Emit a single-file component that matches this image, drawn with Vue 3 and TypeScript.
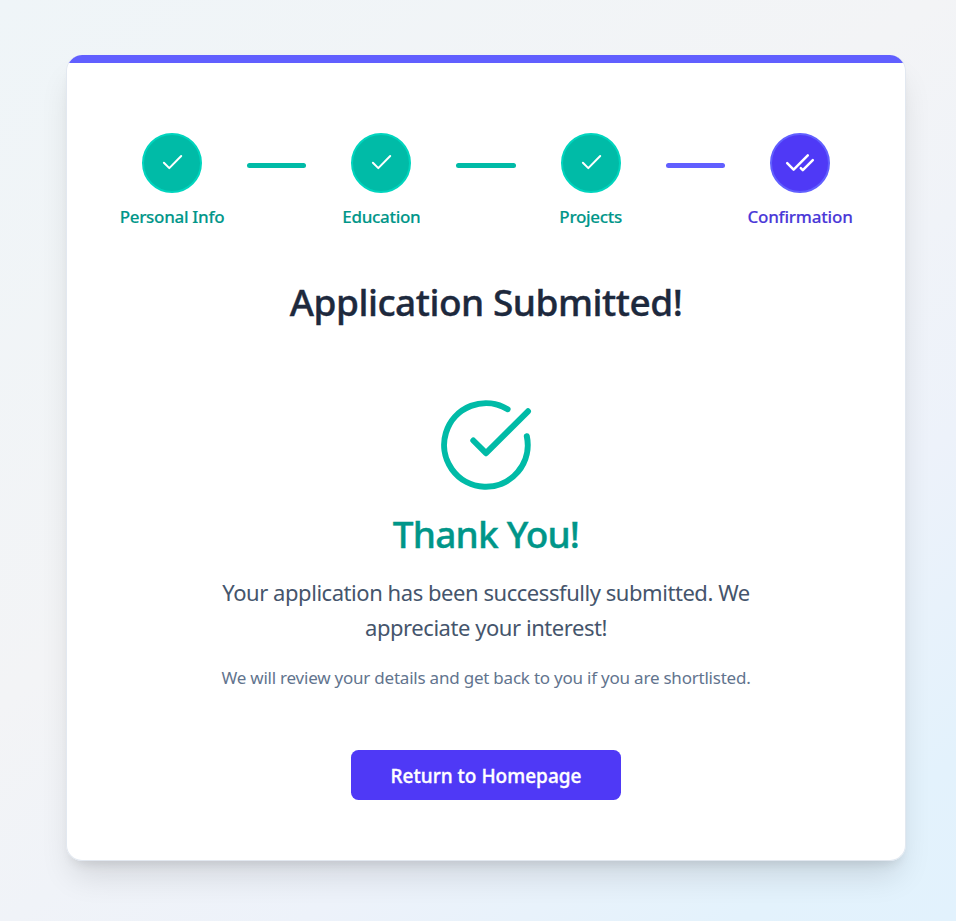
<script setup lang="ts">
interface Step {
  label: string
  current: boolean
}

const steps: Step[] = [
  { label: 'Personal Info', current: false },
  { label: 'Education', current: false },
  { label: 'Projects', current: false },
  { label: 'Confirmation', current: true },
]
</script>

<template>
  <main class="page">
    <section class="card">
      <div class="stepper">
        <template v-for="(step, index) in steps" :key="step.label">
          <span v-if="index > 0" class="bar" :class="{ current: step.current }"></span>
          <div class="step" :class="{ current: step.current }">
            <span class="dot">
              <svg v-if="step.current" width="30" height="30" viewBox="0 0 30 30" class="double">
                <path d="M2.2 15.2l6.4 6.4L22.8 7.4M15.8 20.2l2 2L27.8 12.2" />
              </svg>
              <svg v-else width="30" height="30" viewBox="0 0 30 30">
                <path d="M6.9 14.7l5.4 5.4L24.2 8" />
              </svg>
            </span>
            <span class="label">{{ step.label }}</span>
          </div>
        </template>
      </div>

      <h1>Application Submitted!</h1>

      <div class="result">
        <svg class="success" width="100" height="100" viewBox="0 0 100 100">
          <path d="M71.6 14.2A41.8 41.8 0 1 0 90.8 41.2" />
          <path d="M37.3 45.5L50 58.2L92 16.3" />
        </svg>
        <h2>Thank You!</h2>
        <p class="lead">Your application has been successfully submitted. We appreciate your interest!</p>
        <p class="note">We will review your details and get back to you if you are shortlisted.</p>
        <button type="button">Return to Homepage</button>
      </div>
    </section>
  </main>
</template>

<style>
body {
  margin: 0;
}
</style>

<style scoped>
.page {
  box-sizing: border-box;
  min-height: 921px;
  padding: 55px 50px 60px 66px;
  background: linear-gradient(143deg, #eff5f8, #f3f4f6 43%, #edf2fa 70%, #e3f2fc 90%, #e2f2fd);
  font-family: "Segoe UI", "Noto Sans", sans-serif;
}

.card {
  box-sizing: border-box;
  width: 840px;
  height: 806px;
  padding: 78px 30px 0;
  border: 1px solid #e2e8f0;
  border-top: 0;
  border-radius: 16px;
  background: linear-gradient(#615fff 8px, #fff 8px) border-box;
  box-shadow: 0 20px 32px -6px rgba(0, 0, 0, 0.12), 0 8px 12px -6px rgba(0, 0, 0, 0.11);
}

.stepper {
  display: flex;
}

.step {
  display: flex;
  flex: 1;
  flex-direction: column;
  align-items: center;
  color: #009689;
}

.dot {
  display: flex;
  box-sizing: border-box;
  width: 60px;
  height: 60px;
  align-items: center;
  justify-content: center;
  border: 2px solid #00d5be;
  border-radius: 50%;
  background: #00bba7;
}

.dot svg {
  fill: none;
  stroke: #fff;
  stroke-width: 2;
  stroke-linecap: round;
  stroke-linejoin: round;
}

.dot svg.double {
  stroke-width: 2.5;
}

.label {
  margin-top: 11px;
  font-size: 17px;
  font-weight: 500;
  line-height: 25px;
  letter-spacing: -0.3px;
  white-space: nowrap;
  -webkit-text-stroke: 0.15px currentColor;
}

.bar {
  width: 59.4px;
  height: 5px;
  margin-top: 30px;
  border-radius: 3px;
  background: #00bba7;
}

.step.current {
  color: #4f39f6;
}

.step.current .dot {
  border-color: #615fff;
  background: #4f39f6;
}

.step.current .label {
  color: #4a38d8;
  letter-spacing: -0.2px;
}

.bar.current {
  background: #615fff;
}

h1,
h2,
p {
  margin: 0;
}

h1 {
  margin-top: 50px;
  color: #1d293d;
  font-size: 37px;
  font-weight: 500;
  line-height: 45px;
  letter-spacing: -0.48px;
  text-align: center;
  -webkit-text-stroke: 0.4px currentColor;
}

.result {
  display: flex;
  flex-direction: column;
  align-items: center;
  padding-top: 71px;
  text-align: center;
}

.success {
  fill: none;
  stroke: #00bba7;
  stroke-width: 6;
  stroke-linecap: round;
  stroke-linejoin: round;
}

h2 {
  margin-top: 16px;
  color: #009689;
  font-size: 37px;
  font-weight: 500;
  line-height: 45px;
  letter-spacing: -0.8px;
  -webkit-text-stroke: 0.4px currentColor;
}

.lead {
  width: 560px;
  margin-top: 19px;
  color: #45556c;
  font-size: 22px;
  line-height: 35px;
  letter-spacing: -0.45px;
}

.note {
  margin-top: 20px;
  color: #62748e;
  font-size: 17px;
  line-height: 25px;
  letter-spacing: -0.22px;
}

button {
  width: 270px;
  height: 50px;
  margin-top: 60px;
  padding: 1px 0 0;
  border: 0;
  border-radius: 7.5px;
  background: #4f39f6;
  color: #fff;
  font: 500 19px "Segoe UI", "Noto Sans", sans-serif;
  -webkit-text-stroke: 0.35px currentColor;
}
</style>
